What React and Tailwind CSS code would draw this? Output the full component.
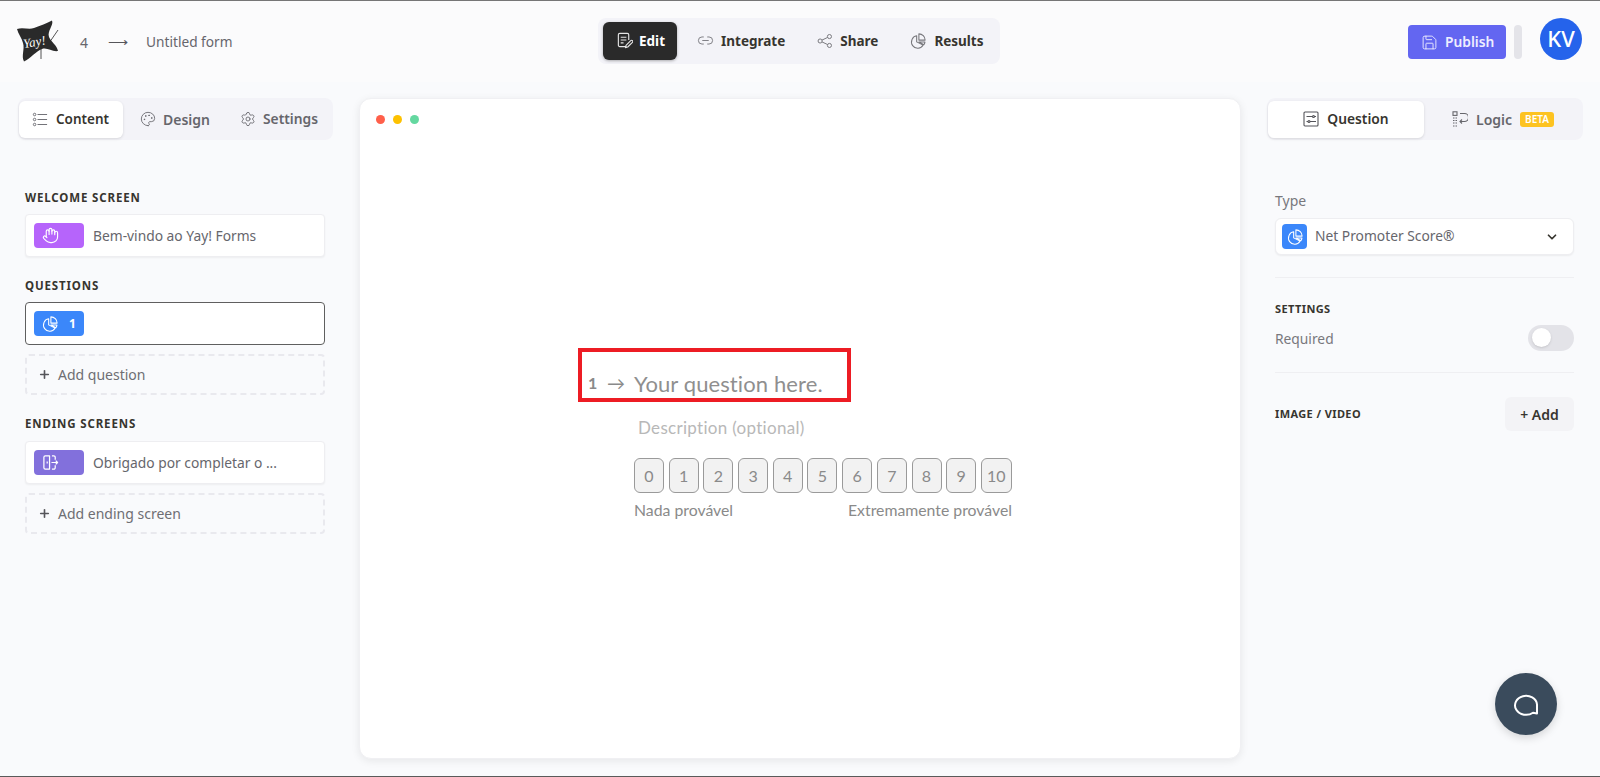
import { Save, Link2, Hand, ChevronDown, Plus, Settings, Palette } from "lucide-react";

const uiFont = { fontFamily: '"Noto Sans", sans-serif' };

const ListIcon = ({ className }) => (
  <svg className={className} viewBox="0 0 18 18" fill="none" stroke="currentColor" strokeWidth="1.1">
    <circle cx="2.5" cy="3" r="1.5" />
    <circle cx="2.5" cy="9" r="1.5" />
    <circle cx="2.5" cy="15" r="1.5" />
    <path d="M6 3h11.5M6 9h11.5M6 15h11.5" />
  </svg>
);

const EditIcon = ({ className }) => (
  <svg className={className} viewBox="0 0 18 18" fill="none" stroke="currentColor" strokeWidth="1.2" strokeLinejoin="round">
    <path d="M11 15.5H4a1.5 1.5 0 0 1-1.5-1.5V3A1.5 1.5 0 0 1 4 1.5h8A1.5 1.5 0 0 1 13.5 3v5.5" />
    <path d="M5 5.5h6M5 8.5h6M5 11.5h3" />
    <path d="M10 16.5l.6-2.4 5-5a1.2 1.2 0 0 1 1.8 1.8l-5 5z" />
  </svg>
);

const ShareIcon = ({ className }) => (
  <svg className={className} viewBox="0 0 18 18" fill="none" stroke="currentColor" strokeWidth="1.1">
    <circle cx="3.5" cy="9" r="2.3" />
    <circle cx="14" cy="4" r="2.3" />
    <circle cx="14" cy="14" r="2.3" />
    <path d="M5.6 8l6.3-3M5.6 10l6.3 3" />
  </svg>
);

const PieIcon = ({ className }) => (
  <svg className={className} viewBox="0 0 18 18" fill="none" stroke="currentColor" strokeWidth="1.2" strokeLinejoin="round">
    <path d="M7.5 3.2a7 7 0 1 0 7.3 10.3L7.5 10z" />
    <path d="M10 1a7 7 0 0 1 7 7h-7z" />
    <path d="M10 10.2h6.8a7 7 0 0 1-1.2 3z" />
  </svg>
);

const SlidersBox = ({ className }) => (
  <svg className={className} viewBox="0 0 16 16" fill="none" stroke="currentColor" strokeWidth="1.1">
    <rect x="1" y="1" width="14" height="14" rx="1" />
    <path d="M3.5 5.5h6M11.5 5.5h1.5M3.5 10.5h1.5M7 10.5h6" />
    <circle cx="10.5" cy="5.5" r="1" />
    <circle cx="6" cy="10.5" r="1" />
  </svg>
);

const LogicIcon = ({ className }) => (
  <svg className={className} viewBox="0 0 16 16" fill="none" stroke="currentColor" strokeWidth="1.1">
    <rect x="1" y="0.8" width="4" height="3.6" />
    <path d="M1 7h4M1 9.5h4M1 12h4M1 15h4" strokeDasharray="1.5 1" />
    <path d="M8 2.5h4.5a3 3 0 0 1 0 8H8" />
    <path d="M10 8.5l-2 2 2 2" />
  </svg>
);

const DoorIcon = ({ className }) => (
  <svg className={className} viewBox="0 0 18 18" fill="none" stroke="currentColor" strokeWidth="1.3" strokeLinejoin="round">
    <path d="M8 2H3.5A1.5 1.5 0 0 0 2 3.5v11A1.5 1.5 0 0 0 3.5 16H8z" />
    <path d="M10.5 2h2A1.5 1.5 0 0 1 14 3.5V6M10.5 16h2a1.5 1.5 0 0 0 1.5-1.5V12" />
    <path d="M10 9h6.5M14.5 7l2 2-2 2" />
    <path d="M5.5 8v2" />
  </svg>
);

const ChatIcon = ({ className }) => (
  <svg className={className} viewBox="0 0 26 24" fill="none" stroke="currentColor" strokeWidth="2" strokeLinejoin="round">
    <path d="M24 21.5l-4-.8A11 9.5 0 1 1 24 12.5z" />
  </svg>
);

const Logo = () => (
  <svg className="w-[43px] h-[43px]" viewBox="0 0 43 43">
    <path
      d="M1 9C7 7 13 10 18 8C24 6 31 3 36 0.5C38 5 31 11 33 17C35 22 41 25 42 31C36 32 31 27 26 29C20 31 14 39 8 41.5C5 36 9 29 7 23C6 18 2 14 1 9Z"
      fill="#2a2a2a"
    />
    <text x="7" y="26" fontFamily='"Liberation Serif", serif' fontStyle="italic" fontSize="13" fill="#ffffff" transform="rotate(-10 20 22)">
      Yay!
    </text>
    <path d="M42 10L31 26" stroke="#2a2a2a" strokeWidth="0.8" />
    <path d="M25 28v11" stroke="#2a2a2a" strokeWidth="0.8" />
  </svg>
);

const TabGroup = ({ children, className }) => (
  <div className={`flex items-center h-[42px] rounded-lg bg-[#f3f3f8] px-px ${className}`}>{children}</div>
);

const SectionLabel = ({ children, small, className = "" }) => (
  <div
    className={`leading-4 font-bold text-[#37352f] ${
      small ? "text-[11px] tracking-[0.4px]" : "text-[11.5px] tracking-[0.85px]"
    } ${className}`}
  >
    {children}
  </div>
);

const ScreenCard = ({ color, icon, number, text, active }) => (
  <div
    className={`flex items-center h-[43px] rounded bg-white pl-[8px] ${
      active ? "border border-[#5f5f5f]" : "border border-[#eeeef1] shadow-[0_1px_2px_rgba(0,0,0,0.05)]"
    }`}
  >
    <div className={`flex items-center w-[50px] h-[25px] rounded pl-[8px] text-white ${color}`}>
      {icon}
      {number && <span className="ml-[11px] text-[12px] font-bold">{number}</span>}
    </div>
    {text && <span className="ml-[9px] pt-[2px] text-[13.8px] text-[#66666c]">{text}</span>}
  </div>
);

const AddRow = ({ children }) => (
  <div className="flex items-center h-[41px] rounded border-2 border-dashed border-[#e9e9ee] pl-[11px] text-[14px] text-[#6e6e73]">
    <Plus className="w-[13px] h-[13px] mr-[7px] text-[#55555a]" strokeWidth={3} />
    {children}
  </div>
);

const NavItem = ({ icon, children, active, className = "" }) => (
  <div
    className={`flex items-center h-[38px] rounded-md text-[13.5px] font-bold ${
      active ? "bg-[#2a2a2a] text-white shadow-[0_1px_3px_rgba(0,0,0,0.3)]" : "text-[#37352f]"
    } ${className}`}
  >
    {icon}
    <span className="pt-[2px]">{children}</span>
  </div>
);

export default function App() {
  const scale = ["0", "1", "2", "3", "4", "5", "6", "7", "8", "9", "10"];

  return (
    <div className="relative w-[1600px] h-[777px] overflow-hidden bg-[#f9fafc] border-t border-b border-t-[#767676] border-b-[#5a5a5a]" style={uiFont}>
      {/* Top bar */}
      <header className="flex items-center h-[81px] bg-[#fbfbfc] pl-[16px] pr-[18px]">
        <div className="flex items-center w-[582px] flex-none">
          <Logo />
          <span className="ml-[21px] pt-[2px] text-[14px] text-[#66666c]">4</span>
          <span className="ml-[20px] text-[14px] leading-none text-[#55555a]">⟶</span>
          <span className="ml-[18px] pt-[2px] text-[13.7px] text-[#66666c]">Untitled form</span>
        </div>

        <div className="flex items-center w-[402px] h-[46px] -mt-[2px] rounded-lg bg-[#f3f3f8] pl-[5px]">
          <NavItem active className="w-[74px] pl-[13px]" icon={<EditIcon className="w-[17px] h-[17px] mr-[6px] text-[#e5e5e5]" />}>
            Edit
          </NavItem>
          <NavItem className="ml-[20px]" icon={<Link2 className="w-[17px] h-[17px] mr-[7px] text-[#77777c]" strokeWidth={1.3} />}>
            Integrate
          </NavItem>
          <NavItem className="ml-[32px]" icon={<ShareIcon className="w-[16px] h-[16px] mr-[7px] text-[#77777c]" />}>
            Share
          </NavItem>
          <NavItem className="ml-[32px]" icon={<PieIcon className="w-[16px] h-[16px] mr-[8px] text-[#77777c]" />}>
            Results
          </NavItem>
        </div>

        <div className="ml-auto flex items-center">
          <div className="flex items-center h-[34px] w-[98px] rounded bg-[#6366f1] pl-[13px] text-[13.8px] font-semibold text-[#eeeeff] mt-[1px]">
            <Save className="w-[17px] h-[17px] mr-[7px]" strokeWidth={1.3} />
            Publish
          </div>
          <div className="ml-[8px] w-[8px] h-[34px] rounded bg-[#e4e4e9] mt-[1px]"></div>
          <div className="ml-[18px] flex items-center justify-center w-[42px] h-[42px] rounded-full bg-[#2563eb] text-[22px] font-medium text-white mb-[6px]">
            KV
          </div>
        </div>
      </header>

      <main className="flex pt-[16px]">
        {/* Left panel */}
        <aside className="w-[315px] ml-[18px]">
          <TabGroup className="w-[315px]">
            <div className="flex items-center w-[104px] h-[37px] rounded-md bg-white pl-[13px] text-[13.5px] font-semibold text-[#37352f] shadow-[0_1px_3px_rgba(0,0,0,0.12)]">
              <ListIcon className="w-[16px] h-[15px] mr-[8px] text-[#66666c]" />
              <span className="pt-px">Content</span>
            </div>
            <div className="flex items-center ml-[17px] text-[14px] font-semibold text-[#66666c]">
              <Palette className="w-[16px] h-[16px] mr-[7px]" strokeWidth={1.3} />
              Design
            </div>
            <div className="flex items-center ml-[30px] text-[13.8px] font-semibold text-[#66666c]">
              <Settings className="w-[16px] h-[16px] mr-[7px]" strokeWidth={1.3} />
              <span className="pt-px">Settings</span>
            </div>
          </TabGroup>

          <div className="pl-[7px] w-[307px]">
            <SectionLabel className="mt-[50px] mb-[8px]">WELCOME SCREEN</SectionLabel>
            <ScreenCard color="bg-[#b664fb]" icon={<Hand className="w-[17px] h-[17px]" strokeWidth={1.6} />} text="Bem-vindo ao Yay! Forms" />

            <SectionLabel className="mt-[21px] mb-[8px]">QUESTIONS</SectionLabel>
            <ScreenCard active color="bg-[#3b87fa]" icon={<PieIcon className="w-[16px] h-[16px]" />} number="1" />
            <div className="mt-[9px]">
              <AddRow>Add question</AddRow>
            </div>

            <SectionLabel className="mt-[21px] mb-[9px]">ENDING SCREENS</SectionLabel>
            <ScreenCard color="bg-[#8270dc]" icon={<DoorIcon className="w-[17px] h-[17px]" />} text="Obrigado por completar o ..." />
            <div className="mt-[9px]">
              <AddRow>Add ending screen</AddRow>
            </div>
          </div>
        </aside>

        {/* Preview */}
        <section className="ml-[26px] w-[882px] h-[661px] rounded-xl bg-white border border-[#f0f0f3] shadow-[0_2px_8px_rgba(0,0,0,0.08)]">
          <div className="flex gap-[8px] pl-[16px] pt-[16px]">
            <span className="w-[9px] h-[9px] rounded-full bg-[#ff5f4a]"></span>
            <span className="w-[9px] h-[9px] rounded-full bg-[#fdc100]"></span>
            <span className="w-[9px] h-[9px] rounded-full bg-[#64d8a0]"></span>
          </div>

          <div className="pl-[228px] pt-[242px]" style={{ fontFamily: "Lato, sans-serif" }}>
            <div className="relative flex items-center h-[34px] w-fit">
              <span className="text-[16px] font-bold text-[#8a8a8a] w-[19px]">1</span>
              <span className="text-[18px] leading-none text-[#8a8a8a] w-[27px]">→</span>
              <span className="text-[22px] tracking-[0.1px] text-[#8f8f8f]">Your question here.</span>
              <div className="absolute -left-[10px] -top-[18px] w-[273px] h-[54px] border-[4px] border-[#ed1c24]"></div>
            </div>
            <div className="ml-[50px] mt-[16px] text-[17px] leading-6 tracking-[0.3px] text-[#b8b8b8]">Description (optional)</div>

            <div className="ml-[46px] mt-[18px] w-[378px]">
              <div className="flex justify-between">
                {scale.map((n) => (
                  <div
                    key={n}
                    className="flex items-center justify-center w-[30px] flex-none last:w-[31px] h-[35px] rounded-md border border-[#9a9a9a] bg-[#f2f2f2] text-[16px] text-[#8a8a8a]"
                  >
                    {n}
                  </div>
                ))}
              </div>
              <div className="flex justify-between mt-[7px] text-[15.8px] leading-5 text-[#8a8a8a]">
                <span>Nada provável</span>
                <span>Extremamente provável</span>
              </div>
            </div>
          </div>
        </section>

        {/* Right panel */}
        <aside className="ml-[26px] w-[316px]">
          <TabGroup className="w-[316px]">
            <div className="flex items-center justify-center w-[156px] h-[37px] rounded-md bg-white text-[13.8px] font-semibold text-[#37352f] shadow-[0_1px_3px_rgba(0,0,0,0.12)]">
              <SlidersBox className="w-[16px] h-[16px] mr-[8px] text-[#55555a]" />
              <span className="pt-px">Question</span>
            </div>
            <div className="flex items-center ml-[28px] text-[14px] font-semibold text-[#66666c]">
              <LogicIcon className="w-[16px] h-[16px] mr-[8px]" />
              Logic
              <span className="ml-[8px] flex items-center h-[15px] px-[5px] rounded-[3px] bg-[#fdc321] text-[10px] font-semibold text-white">BETA</span>
            </div>
          </TabGroup>

          <div className="pl-[8px] w-[307px]">
            <div className="mt-[51px] mb-[7px] text-[14px] leading-5 text-[#78787d]">Type</div>
            <div className="flex items-center h-[37px] rounded-md bg-white border border-[#eeeef1] shadow-[0_1px_2px_rgba(0,0,0,0.06)] pl-[6px] pr-[14px]">
              <div className="flex items-center justify-center w-[25px] h-[25px] rounded bg-[#3b87fa] text-white">
                <PieIcon className="w-[16px] h-[16px]" />
              </div>
              <span className="ml-[8px] text-[13.8px] text-[#66666c]">Net Promoter Score®</span>
              <ChevronDown className="ml-auto w-[14px] h-[14px] text-[#37352f]" strokeWidth={3} />
            </div>
            <div className="mt-[22px] h-px bg-[#efeff2]"></div>

            <SectionLabel small className="mt-[23px]">SETTINGS</SectionLabel>
            <div className="flex items-center justify-between mt-[7px] h-[27px]">
              <span className="pt-[3px] text-[13.8px] text-[#78787d]">Required</span>
              <span className="flex items-center w-[46px] h-[26px] rounded-full bg-[#e3e3e8] pl-[4px]">
                <span className="w-[19px] h-[19px] rounded-full bg-white shadow-sm"></span>
              </span>
            </div>
            <div className="mt-[21px] h-px bg-[#efeff2]"></div>

            <div className="flex items-center justify-between mt-[24px]">
              <SectionLabel small>IMAGE / VIDEO</SectionLabel>
              <div className="flex items-center justify-center w-[69px] h-[34px] rounded-md bg-[#f3f3f6] text-[14px] font-semibold text-[#37352f]">
                + Add
              </div>
            </div>
          </div>
        </aside>
      </main>

      {/* Chat bubble */}
      <div className="absolute left-[1495px] top-[672px] flex items-center justify-center w-[62px] h-[62px] rounded-full bg-[#3a4b5c] text-white shadow-[0_3px_8px_rgba(0,0,0,0.15)]">
        <ChatIcon className="w-[26px] h-[24px]" />
      </div>
    </div>
  );
}
